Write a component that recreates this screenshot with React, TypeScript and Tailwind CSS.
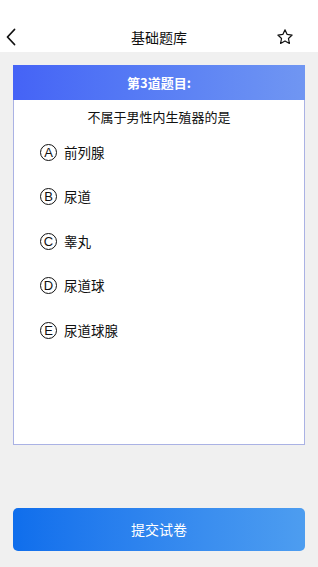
import React from "react";

const options = [
  { k: "A", t: "前列腺" },
  { k: "B", t: "尿道" },
  { k: "C", t: "睾丸" },
  { k: "D", t: "尿道球" },
  { k: "E", t: "尿道球腺" },
];

export default function App() {
  return (
    <div
      className="w-[318px] h-[567px] bg-[#f0f0f0] flex flex-col text-[#111]"
      style={{ fontFamily: '"Noto Sans CJK SC", "Noto Sans", sans-serif' }}
    >
      <div className="h-[52px] bg-white grid grid-cols-[1fr_auto_1fr] items-center pt-[22px] shrink-0">
        <div className="pl-[5px] flex">
          <svg width="12" height="18" viewBox="0 0 12 18">
            <path d="M9.5 1.5 L2.5 9 L9.5 16.5" fill="none" stroke="#111" strokeWidth="1.8" strokeLinecap="round" strokeLinejoin="round" />
          </svg>
        </div>
        <div className="text-[14px] leading-none">基础题库</div>
        <div className="flex justify-end pr-[24px]">
          <svg width="18" height="18" viewBox="0 0 24 24">
            <path d="M12 2.5 L14.9 8.6 L21.5 9.4 L16.6 14 L17.9 20.6 L12 17.3 L6.1 20.6 L7.4 14 L2.5 9.4 L9.1 8.6 Z" fill="none" stroke="#111" strokeWidth="1.6" strokeLinejoin="round" />
          </svg>
        </div>
      </div>

      <div className="mx-[13px] mt-[13px] h-[380px] bg-white border border-[#aab2e4] flex flex-col">
        <div className="h-[35px] -mx-px -mt-px bg-gradient-to-r from-[#4563f6] to-[#7096f2] flex items-center justify-center text-white text-[13px] font-bold">
          第3道题目:
        </div>
        <div className="text-center text-[13px] mt-[8px] leading-[18px]">不属于男性内生殖器的是</div>
        <div className="flex flex-col gap-[26.5px] mt-[17px] pl-[26px]">
          {options.map((o) => (
            <div key={o.k} className="flex items-center h-[18px]">
              <div className="w-[17px] h-[17px] rounded-full border border-[#111] flex items-center justify-center text-[13px] leading-none" style={{ fontFamily: '"Liberation Sans", Arial, sans-serif' }}>
                {o.k}
              </div>
              <div className="ml-[7px] text-[13.5px]">{o.t}</div>
            </div>
          ))}
        </div>
      </div>

      <div className="mx-[13px] mt-[63px] h-[43px] rounded-[5px] bg-gradient-to-r from-[#0f6eec] to-[#4d9df0] flex items-center justify-center text-white text-[14px]">
        提交试卷
      </div>
    </div>
  );
}
